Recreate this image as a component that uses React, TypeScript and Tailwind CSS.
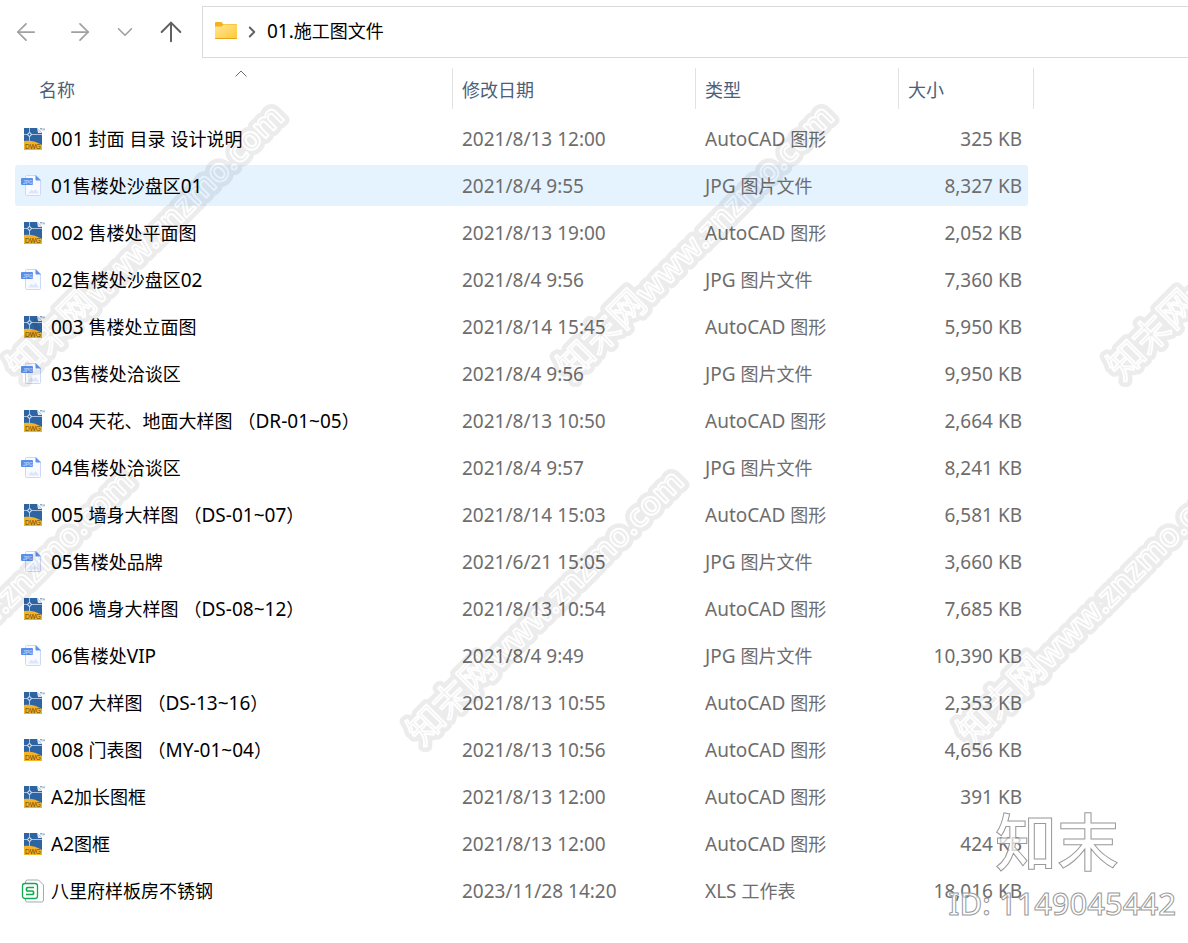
import { ArrowLeft, ArrowRight, ArrowUp, ChevronDown, ChevronRight } from "lucide-react";

type FileKind = "dwg" | "jpg" | "xls";

type FileRow = {
  name: string;
  kind: FileKind;
  date: string;
  size: string;
  hovered?: boolean;
};

const files: FileRow[] = [
  { name: "001 封面 目录 设计说明", kind: "dwg", date: "2021/8/13 12:00", size: "325 KB" },
  { name: "01售楼处沙盘区01", kind: "jpg", date: "2021/8/4 9:55", size: "8,327 KB", hovered: true },
  { name: "002 售楼处平面图", kind: "dwg", date: "2021/8/13 19:00", size: "2,052 KB" },
  { name: "02售楼处沙盘区02", kind: "jpg", date: "2021/8/4 9:56", size: "7,360 KB" },
  { name: "003 售楼处立面图", kind: "dwg", date: "2021/8/14 15:45", size: "5,950 KB" },
  { name: "03售楼处洽谈区", kind: "jpg", date: "2021/8/4 9:56", size: "9,950 KB" },
  { name: "004 天花、地面大样图 （DR-01~05）", kind: "dwg", date: "2021/8/13 10:50", size: "2,664 KB" },
  { name: "04售楼处洽谈区", kind: "jpg", date: "2021/8/4 9:57", size: "8,241 KB" },
  { name: "005 墙身大样图 （DS-01~07）", kind: "dwg", date: "2021/8/14 15:03", size: "6,581 KB" },
  { name: "05售楼处品牌", kind: "jpg", date: "2021/6/21 15:05", size: "3,660 KB" },
  { name: "006 墙身大样图 （DS-08~12）", kind: "dwg", date: "2021/8/13 10:54", size: "7,685 KB" },
  { name: "06售楼处VIP", kind: "jpg", date: "2021/8/4 9:49", size: "10,390 KB" },
  { name: "007 大样图 （DS-13~16）", kind: "dwg", date: "2021/8/13 10:55", size: "2,353 KB" },
  { name: "008 门表图 （MY-01~04）", kind: "dwg", date: "2021/8/13 10:56", size: "4,656 KB" },
  { name: "A2加长图框", kind: "dwg", date: "2021/8/13 12:00", size: "391 KB" },
  { name: "A2图框", kind: "dwg", date: "2021/8/13 12:00", size: "424 KB" },
  { name: "八里府样板房不锈钢", kind: "xls", date: "2023/11/28 14:20", size: "18,016 KB" },
];

const typeLabels: Record<FileKind, string> = {
  dwg: "AutoCAD 图形",
  jpg: "JPG 图片文件",
  xls: "XLS 工作表",
};

// Latin runs are set one pixel larger than the Chinese ones
const Label = ({ text }: { text: string }) => (
  <>
    {text.split(/([\u3000-\u9fff\uff00-\uffef]+)/).map((run, i) =>
      run === "" ? null : (
        <span key={i} className={i % 2 ? "text-[18px]" : "text-[19px]"}>
          {run}
        </span>
      )
    )}
  </>
);

const DwgIcon = () => (
  <svg width="24" height="24" viewBox="0 0 24 24" className="shrink-0" aria-hidden="true">
    <path d="M3 1h13l5 5v17H3z" fill="#2f64a3" />
    <path d="M16 1l5 5h-4z" fill="#dfe8f3" />
    <path d="M3 14c6-1 12 0 18 4v5H3z" fill="#f5b323" />
    <path d="M3 7.500h18M8.500 1v13" stroke="#a9c4e2" strokeWidth="1" />
    <circle cx="8.500" cy="7.500" r="1.700" fill="#2f64a3" stroke="#fff" strokeWidth="1" />
    <text x="4" y="22" fontSize="6.500" fontFamily="Liberation Sans, sans-serif" fill="#5b430f">
      DWG
    </text>
    <path d="M19 1.500h2M20 1.500v2M22 3.500v-2l1 1 1-1v2" stroke="#5d7fae" strokeWidth=".6" fill="none" />
  </svg>
);

const JpgIcon = () => (
  <svg width="24" height="24" viewBox="0 0 24 24" className="shrink-0" aria-hidden="true">
    <path d="M5.500 1.500h9.500l4.500 4.500v14.500a1 1 0 0 1-1 1h-13a1 1 0 0 1-1-1v-18a1 1 0 0 1 1-1z" fill="#f8faff" stroke="#ccd9f4" />
    <path d="M14.500 1l5.500 5.500h-4.500a1 1 0 0 1-1-1z" fill="#5f93e8" />
    <path d="M7 19.500l3.500-4 2 2 2-2.500 3.500 4.500z" fill="#dce6fa" />
    <rect x="0" y="4" width="12" height="7" rx="1" fill="#5b90e8" />
    <text x="2" y="9.500" fontSize="5" fontWeight="bold" fontFamily="Liberation Sans, sans-serif" fill="#b3cdf8">
      JPG
    </text>
  </svg>
);

const XlsIcon = () => (
  <svg width="24" height="24" viewBox="0 0 24 24" className="shrink-0" fill="none" aria-hidden="true">
    <path d="M4.500 5V3a2 2 0 0 1 2-2h11l5 5v15a2 2 0 0 1-2 2h-14a2 2 0 0 1-2-2v-2" stroke="#a2a9b8" />
    <rect x="1.500" y="4.500" width="15" height="15" rx="2.500" fill="#fff" stroke="#12a94f" strokeWidth="1.300" />
    <path d="M13 8.500H6.500a1 1 0 0 0-1 1V11a1 1 0 0 0 1 1h5a1 1 0 0 1 1 1v1.500a1 1 0 0 1-1 1H5" stroke="#12a94f" strokeWidth="1.700" />
  </svg>
);

const fileIcons = { dwg: DwgIcon, jpg: JpgIcon, xls: XlsIcon };

const FolderIcon = () => (
  <svg width="24" height="20" viewBox="0 0 24 20" className="shrink-0" aria-hidden="true">
    <defs>
      <linearGradient id="folder" x1="0" y1="0" x2="1" y2="1">
        <stop offset="0" stopColor="#ffe69a" />
        <stop offset="1" stopColor="#ffc933" />
      </linearGradient>
    </defs>
    <path d="M1 1a1 1 0 0 1 1-1h5.500l1.500 2h13a1 1 0 0 1 1 1v3H1z" fill="#f5b116" />
    <path d="M1 4.500h7l1.500-2H23V16a1 1 0 0 1-1 1H2a1 1 0 0 1-1-1z" fill="url(#folder)" />
    <path d="M1 16h22a1 1 0 0 1-1 1H2a1 1 0 0 1-1-1z" fill="#e9a21c" />
  </svg>
);

const NavBar = () => (
  <nav className="flex items-center pt-[6px]" aria-label="导航">
    <div className="flex w-[202px] shrink-0 items-center text-[#a0a0a0]">
      <button type="button" aria-label="后退" className="ml-[12px]">
        <ArrowLeft size={28} strokeWidth={1.5} />
      </button>
      <button type="button" aria-label="前进" className="ml-[26px]">
        <ArrowRight size={28} strokeWidth={1.5} />
      </button>
      <button type="button" aria-label="最近" className="ml-[18px]">
        <ChevronDown size={26} strokeWidth={1.5} />
      </button>
      <button type="button" aria-label="向上" className="ml-[17px] text-[#606060]">
        <ArrowUp size={32} strokeWidth={1.5} />
      </button>
    </div>
    <div className="flex h-[52px] flex-1 items-center border border-r-0 border-[#d9d9d9] pl-[11px]">
      <FolderIcon />
      <ChevronRight size={18} strokeWidth={2.5} className="ml-[5px] text-[#606060]" />
      <span className="ml-[6px] pb-[2px] text-black">
        <Label text="01.施工图文件" />
      </span>
    </div>
  </nav>
);

const columnHeader = "h-[44px] p-0 text-left align-top font-normal";
const columnLabel = "flex h-[41px] items-center border-r border-[#e2e2e2] pt-[2px] text-[18px]";

const FileTable = () => (
  <table className="ml-[15px] mt-[4px] w-[1019px] table-fixed border-separate border-spacing-x-0 border-spacing-y-[6px]">
    <colgroup>
      <col className="w-[438px]" />
      <col className="w-[243px]" />
      <col className="w-[203px]" />
      <col className="w-[129px]" />
      <col className="w-[6px]" />
    </colgroup>
    <thead className="text-[#4c607a]">
      <tr>
        <th className={columnHeader} aria-sort="ascending">
          <div className={`${columnLabel} relative pl-[24px]`}>
            名称
            <svg width="12" height="7" viewBox="0 0 12 7" className="absolute left-[220px] top-[2px]" aria-hidden="true">
              <path d="M.5 6.500L6 1l5.500 5.500" fill="none" stroke="#707070" />
            </svg>
          </div>
        </th>
        <th className={columnHeader}>
          <div className={`${columnLabel} pl-[9px]`}>修改日期</div>
        </th>
        <th className={columnHeader}>
          <div className={`${columnLabel} pl-[9px]`}>类型</div>
        </th>
        <th className={columnHeader} colSpan={2}>
          <div className={`${columnLabel} pl-[9px]`}>大小</div>
        </th>
      </tr>
    </thead>
    <tbody className="text-[#6d6d6d]">
      {files.map((file) => {
        const Icon = fileIcons[file.kind];
        const cell = file.hovered ? "h-[41px] bg-[#e5f3ff] p-0" : "h-[41px] p-0";
        return (
          <tr key={file.name}>
            <td className={`${cell} rounded-l-[3px]`}>
              <div className="flex items-center gap-[6px] pl-[6px] text-black">
                <Icon />
                <span className="whitespace-pre pt-[2px]">
                  <Label text={file.name} />
                </span>
              </div>
            </td>
            <td className={cell}>
              <div className="pl-[9px] pt-[2px]">
                <Label text={file.date} />
              </div>
            </td>
            <td className={cell}>
              <div className="pl-[9px] pt-[2px]">
                <Label text={typeLabels[file.kind]} />
              </div>
            </td>
            <td className={`${cell} rounded-r-[3px]`}>
              <div className="pr-[6px] pt-[2px] text-right">
                <Label text={file.size} />
              </div>
            </td>
          </tr>
        );
      })}
    </tbody>
  </table>
);

const markCenters = [
  [147, 243],
  [697, 243],
  [1247, 243],
  [-3, 608],
  [547, 608],
  [1097, 608],
];

const MarkText = () => (
  <>
    <tspan fontSize="36" fontWeight="normal">
      知末网
    </tspan>
    <tspan fontSize="32" fontWeight="600">
      www.znzmo.com
    </tspan>
  </>
);

const Watermark = () => (
  <div className="pointer-events-none absolute inset-0 overflow-hidden" aria-hidden="true">
    <svg className="h-full w-full" textAnchor="middle">
      <defs>
        <mask id="hollow" maskUnits="userSpaceOnUse" x="-220" y="-50" width="440" height="100">
          <text y="10" fill="#fff" stroke="#fff" strokeWidth="11" strokeLinejoin="round">
            <MarkText />
          </text>
          <text y="10" fill="#fff" stroke="#000" strokeWidth="2" strokeLinejoin="round">
            <MarkText />
          </text>
        </mask>
      </defs>
      {markCenters.map(([x, y]) => (
        <g key={`${x},${y}`} transform={`translate(${x} ${y}) rotate(-45)`}>
          <rect x="-220" y="-50" width="440" height="100" fill="#000" fillOpacity=".075" mask="url(#hollow)" />
        </g>
      ))}
    </svg>
  </div>
);

const Stamp = () => (
  <div className="pointer-events-none absolute right-[12px] top-[806px] flex flex-col items-end text-white/70 [-webkit-text-stroke:1px_#999999]">
    <div className="mr-[57px] text-[62px] font-medium leading-[72px]">知末</div>
    <div className="text-[31px] font-medium leading-[50px]">ID: 1149045442</div>
  </div>
);

const App = () => (
  <main className="relative min-h-screen overflow-hidden bg-white pb-[24px] font-['Noto_Sans','Noto_Sans_CJK_SC',sans-serif] leading-[24px]">
    <NavBar />
    <FileTable />
    <Watermark />
    <Stamp />
  </main>
);

export default App;
